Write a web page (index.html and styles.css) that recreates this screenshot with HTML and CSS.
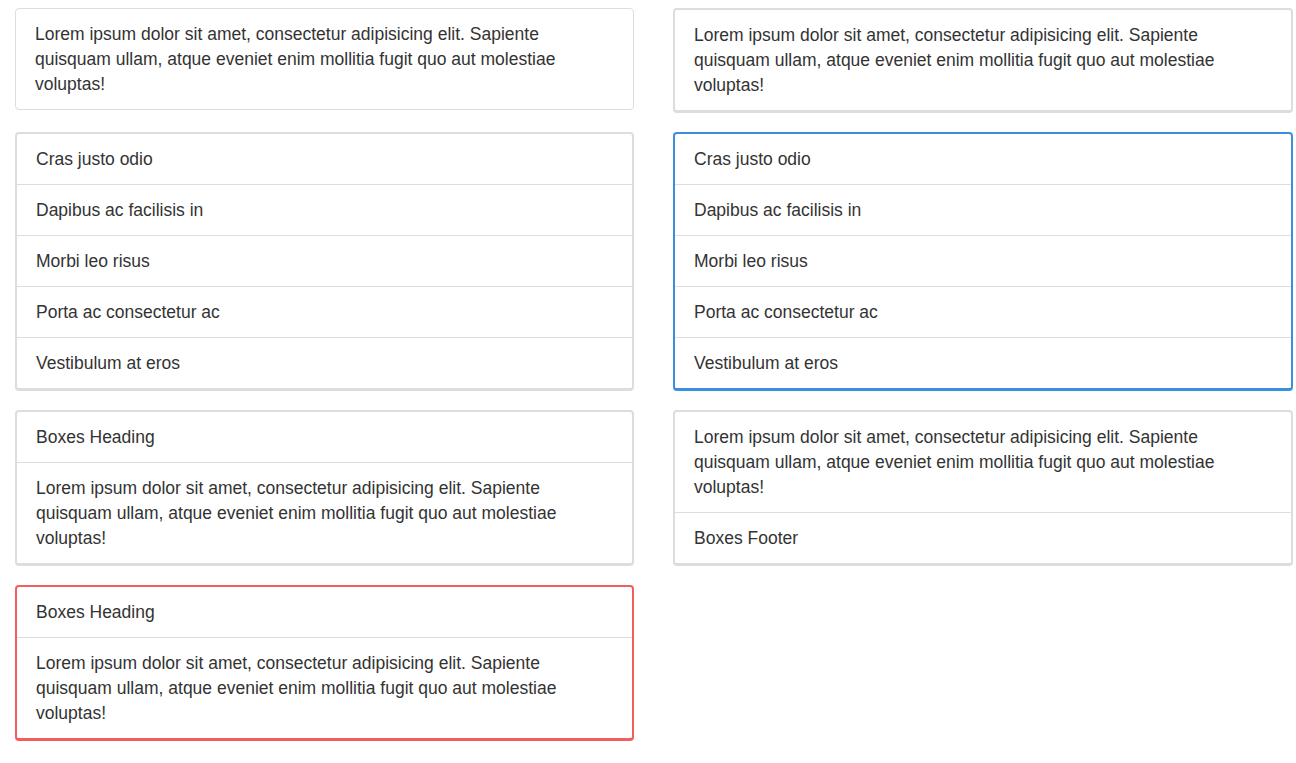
FILE: index.html
```html
<!DOCTYPE html>
<html>
<head>
<meta charset="utf-8">
<link rel="stylesheet" href="styles.css">
</head>
<body>
<div class="grid">
  <div class="box box-plain">
    <div class="section">Lorem ipsum dolor sit amet, consectetur adipisicing elit. Sapiente quisquam ullam, atque eveniet enim mollitia fugit quo aut molestiae voluptas!</div>
  </div>
  <div class="box">
    <div class="section">Lorem ipsum dolor sit amet, consectetur adipisicing elit. Sapiente quisquam ullam, atque eveniet enim mollitia fugit quo aut molestiae voluptas!</div>
  </div>
  <div class="box">
    <div class="section">Cras justo odio</div>
    <div class="section">Dapibus ac facilisis in</div>
    <div class="section">Morbi leo risus</div>
    <div class="section">Porta ac consectetur ac</div>
    <div class="section">Vestibulum at eros</div>
  </div>
  <div class="box box-blue">
    <div class="section">Cras justo odio</div>
    <div class="section">Dapibus ac facilisis in</div>
    <div class="section">Morbi leo risus</div>
    <div class="section">Porta ac consectetur ac</div>
    <div class="section">Vestibulum at eros</div>
  </div>
  <div class="box">
    <div class="section">Boxes Heading</div>
    <div class="section">Lorem ipsum dolor sit amet, consectetur adipisicing elit. Sapiente quisquam ullam, atque eveniet enim mollitia fugit quo aut molestiae voluptas!</div>
  </div>
  <div class="box">
    <div class="section">Lorem ipsum dolor sit amet, consectetur adipisicing elit. Sapiente quisquam ullam, atque eveniet enim mollitia fugit quo aut molestiae voluptas!</div>
    <div class="section">Boxes Footer</div>
  </div>
  <div class="box box-red">
    <div class="section">Boxes Heading</div>
    <div class="section">Lorem ipsum dolor sit amet, consectetur adipisicing elit. Sapiente quisquam ullam, atque eveniet enim mollitia fugit quo aut molestiae voluptas!</div>
  </div>
</div>
</body>
</html>
```
FILE: styles.css
```css
html, body {
  margin: 0;
  padding: 0;
  background: #fff;
}
body {
  font-family: "Liberation Sans", Arial, sans-serif;
  font-size: 17.5px;
  line-height: 25px;
  color: #333;
}
.grid {
  display: grid;
  grid-template-columns: 619px 620px;
  column-gap: 39px;
  row-gap: 19px;
  padding: 8px 15px;
  align-items: start;
}
.box {
  border: 2px solid #dddddd;
  border-bottom-width: 3px;
  border-radius: 4px;
  background: #fff;
}
.box-plain {
  border: 1px solid #dddddd;
}
.box-blue {
  border-color: #3a8ee0;
}
.box-red {
  border-color: #f25d5d;
}
.section {
  padding: 12.5px 19px;
}
.section + .section {
  border-top: 1px solid #dddddd;
}
```
